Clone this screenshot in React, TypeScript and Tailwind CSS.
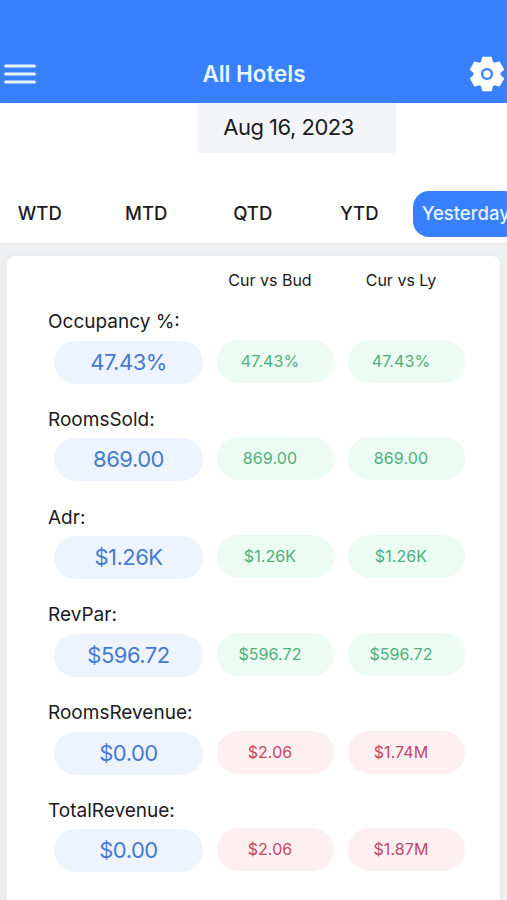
import { useState } from "react";
import clsx from "clsx";

const tabs = ["WTD", "MTD", "QTD", "YTD", "Yesterday"];

const metrics = [
    { label: "Occupancy %:", value: "47.43%", budget: "47.43%", lastYear: "47.43%", up: true },
    { label: "RoomsSold:", value: "869.00", budget: "869.00", lastYear: "869.00", up: true },
    { label: "Adr:", value: "$1.26K", budget: "$1.26K", lastYear: "$1.26K", up: true },
    { label: "RevPar:", value: "$596.72", budget: "$596.72", lastYear: "$596.72", up: true },
    { label: "RoomsRevenue:", value: "$0.00", budget: "$2.06", lastYear: "$1.74M", up: false },
    { label: "TotalRevenue:", value: "$0.00", budget: "$2.06", lastYear: "$1.87M", up: false },
];

const MenuIcon = () => (
    <svg width="32" height="20" viewBox="0 0 32 20" stroke="#e3f6ff" strokeWidth="3" strokeLinecap="round">
        <path d="M1.5 2h29M1.5 10h29M1.5 18h29" />
    </svg>
);

const GearIcon = () => (
    <svg width="36" height="36" viewBox="-18 -18 36 36">
        <g fill="#fff" stroke="#fff" strokeWidth="1.6" strokeLinejoin="round">
            <circle r="12.8" />
            {[0, 60, 120].map((angle) => (
                <path
                    key={angle}
                    transform={`rotate(${angle})`}
                    d="M-4.2 -16.4h8.4l1.1 5.2v22.4l-1.1 5.2h-8.4l-1.1 -5.2v-22.4z"
                />
            ))}
        </g>
        <circle r="4.9" fill="#fff" stroke="#3880ff" strokeWidth="2.4" />
    </svg>
);

const DeltaPill = ({ text, up }: { text: string; up: boolean }) => (
    <div
        className={clsx(
            "flex h-[43px] w-[117px] items-center justify-center rounded-full pr-[11px] pb-px text-base tracking-[0.1px]",
            up ? "bg-[#ecfcf2] text-[#4bb07c]" : "bg-[#feeff1] text-[#c04766]"
        )}
    >
        {text}
    </div>
);

const App = () => {
    const [active, setActive] = useState("Yesterday");

    return (
        <div className="flex h-[900px] w-[507px] flex-col overflow-hidden bg-[#eef0f2] font-['Inter',sans-serif] text-[#1b1b1d]">
            <header className="flex h-[103px] shrink-0 items-end justify-between bg-[#3880ff] pr-[2px] pb-[11px] pl-1">
                <button className="mb-2"><MenuIcon /></button>
                <h1 className="mb-px ml-[3px] text-[22.4px] leading-[34px] font-semibold text-[#e6f7ff]">All Hotels</h1>
                <button><GearIcon /></button>
            </header>

            <div className="flex h-[140px] shrink-0 flex-col bg-white shadow-[0_1px_2px_rgba(0,0,0,0.06)]">
                <div className="ml-[197px] flex h-[50px] w-[199px] items-center justify-center bg-[#f4f5f9] pr-4 pb-px text-[22px] tracking-[-0.5px]">
                    Aug 16, 2023
                </div>
                <nav className="mt-[38px] -ml-[13px] flex">
                    {tabs.map((tab) => (
                        <button
                            key={tab}
                            onClick={() => setActive(tab)}
                            className={clsx(
                                "h-[46px] w-[106.5px] shrink-0 rounded-[16px] pr-px text-[18.5px] font-medium",
                                active === tab && "bg-[#3880ff] text-[#e6f4ff]"
                            )}
                        >
                            {tab}
                        </button>
                    ))}
                </nav>
            </div>

            <main className="mx-[7px] mt-[13px] flex-1 rounded-t-lg bg-white pl-[41px] shadow-[0_0_10px_rgba(0,0,0,0.05)]">
                <div className="flex h-[49px] pl-[169px] text-base">
                    <span className="w-[106px] pt-3 text-center">Cur vs Bud</span>
                    <span className="ml-[25px] w-[106px] pt-3 text-center">Cur vs Ly</span>
                </div>
                {metrics.map(({ label, value, budget, lastYear, up }) => (
                    <section key={label} className="h-[97.75px]">
                        <h2 className="h-[34.5px] pt-[3px] text-[19px] leading-[28px]">{label}</h2>
                        <div className="flex gap-3.5 pl-1.5">
                            <div className="mt-px flex h-[43px] w-[149px] items-center justify-center rounded-full bg-[#edf4ff] text-[22px] tracking-[-0.5px] text-[#447bd1]">
                                {value}
                            </div>
                            <DeltaPill text={budget} up={up} />
                            <DeltaPill text={lastYear} up={up} />
                        </div>
                    </section>
                ))}
            </main>
        </div>
    );
};

export default App;
